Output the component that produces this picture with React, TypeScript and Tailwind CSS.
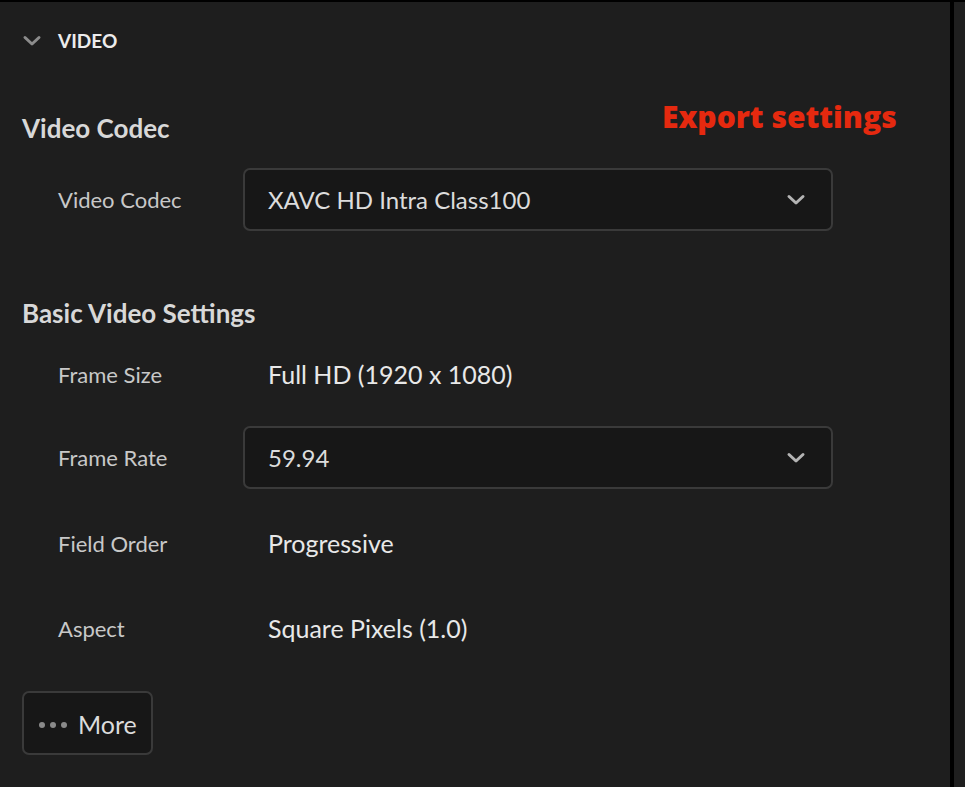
import React from "react";

const Chevron = ({ className }: { className?: string }) => (
  <svg viewBox="0 0 20 12" className={className} fill="none" stroke="currentColor" strokeWidth={3} strokeLinecap="round" strokeLinejoin="round">
    <path d="M3 2.5 L10 9 L17 2.5" />
  </svg>
);

const Select = ({ value }: { value: string }) => (
  <div className="flex h-[63px] w-[590px] items-center justify-between rounded-[7px] border-2 border-[#3a3a3a] bg-[#171717] pl-[23px] pr-[25px]">
    <span className="text-[24px] text-[#dcdcdc]">{value}</span>
    <Chevron className="h-[12px] w-[20px] text-[#b4b4b4]" />
  </div>
);

const Row = ({ label, children, className = "" }: { label: string; children: React.ReactNode; className?: string }) => (
  <div className={`flex h-[63px] items-center pl-[58px] ${className}`}>
    <div className="w-[185px] text-[22px] text-[#c8c8c8]">{label}</div>
    {children}
  </div>
);

const Value = ({ text }: { text: string }) => (
  <span className="pl-[25px] text-[25px] text-[#e8e8e8]">{text}</span>
);

export default function App() {
  return (
    <div className="flex h-[787px] w-[965px] border-t-2 border-black bg-[#1e1e1e]" style={{ fontFamily: "Lato, 'Open Sans', sans-serif" }}>
      <div className="relative flex w-[950px] flex-col">
        <div className="flex h-[78px] items-center gap-[16px] pl-[22px]">
          <Chevron className="h-[12px] w-[20px] text-[#8c8c8c]" />
          <span className="text-[19px] font-bold text-[#ececec]">VIDEO</span>
        </div>

        <div className="mt-[24px] flex h-[48px] items-center pl-[22px] text-[26px] font-bold text-[#d8d8d8]">Video Codec</div>
        <Row label="Video Codec" className="mt-[16px]">
          <Select value="XAVC HD Intra Class100" />
        </Row>

        <div className="mt-[58px] flex h-[48px] items-center pl-[22px] text-[26px] font-bold text-[#d8d8d8]">Basic Video Settings</div>
        <Row label="Frame Size" className="mt-[6px]">
          <Value text="Full HD (1920 x 1080)" />
        </Row>
        <Row label="Frame Rate" className="mt-[20px]">
          <Select value="59.94" />
        </Row>
        <Row label="Field Order" className="mt-[23px]">
          <Value text="Progressive" />
        </Row>
        <Row label="Aspect" className="mt-[22px]">
          <Value text="Square Pixels (1.0)" />
        </Row>

        <div className="ml-[22px] mt-[31px] flex h-[64px] w-[131px] items-center gap-[11px] rounded-[7px] border-2 border-[#3a3a3a] bg-[#171717] pl-[15px] pt-[4px]">
          <div className="flex gap-[5px]">
            <span className="h-[6px] w-[6px] rounded-full bg-[#8a8a8a]" />
            <span className="h-[6px] w-[6px] rounded-full bg-[#8a8a8a]" />
            <span className="h-[6px] w-[6px] rounded-full bg-[#8a8a8a]" />
          </div>
          <span className="text-[25px] text-[#dcdcdc]">More</span>
        </div>

        <div className="absolute left-[662px] top-[92px] text-[30px] font-extrabold text-[#e5290f]" style={{ fontFamily: "'Open Sans', sans-serif" }}>Export settings</div>
      </div>
      <div className="w-[4px] bg-black" />
      <div className="flex-1 bg-[#1f1f1f]" />
    </div>
  );
}
